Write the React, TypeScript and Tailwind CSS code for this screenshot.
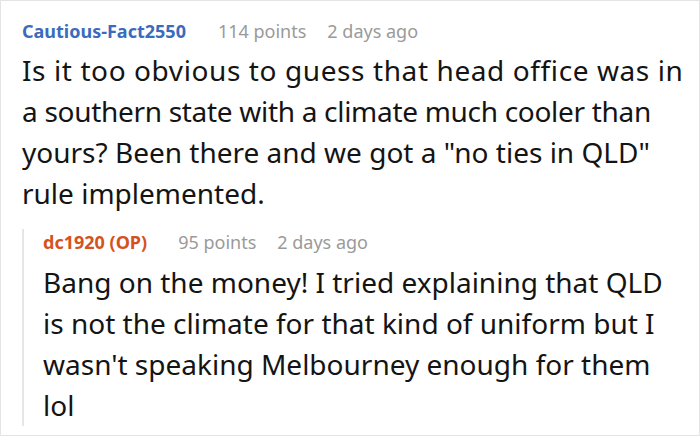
import React from "react";

const bodyLines: { t: string; c: string }[] = [
  { t: "Is it too obvious to guess that head office was in", c: "tracking-[0.6px]" },
  { t: "a southern state with a climate much cooler than", c: "tracking-[-0.3px]" },
  { t: 'yours? Been there and we got a "no ties in QLD"', c: "" },
  { t: "rule implemented.", c: "" },
];

const replyLines = [
  "Bang on the money! I tried explaining that QLD",
  "is not the climate for that kind of uniform but I",
  "wasn't speaking Melbourney enough for them",
  "lol",
];

export default function App() {
  return (
    <div className="w-[700px] h-[436px] bg-white border border-[#e4e4e4] overflow-hidden font-['Noto_Sans',sans-serif] pl-[21px] pr-[20px] pt-[17px]">
      <div className="flex items-baseline text-[18px] leading-[26px] whitespace-nowrap">
        <span className="font-bold text-[#3a6bbd]">Cautious-Fact2550</span>
        <span className="ml-[32px] text-[#9a9a9a]">114 points</span>
        <span className="ml-[21px] text-[#9a9a9a]">2 days ago</span>
      </div>
      <p className="mt-[6px] text-[28px] leading-[41px] text-[#141414] whitespace-nowrap">
        {bodyLines.map((l, i) => (
          <span key={i} className={"block " + l.c}>{l.t}</span>
        ))}
      </p>
      <div className="mt-[27px] border-l-2 border-[#e6e6e6] pl-[19px]">
        <div className="-mt-[12px] flex items-baseline text-[18px] leading-[26px] whitespace-nowrap">
          <span className="font-bold text-[#d4531d]">dc1920 (OP)</span>
          <span className="ml-[31px] text-[#9a9a9a]">95 points</span>
          <span className="ml-[21px] text-[#9a9a9a]">2 days ago</span>
        </div>
        <p className="mt-[7px] -mb-[10px] text-[28px] leading-[41px] text-[#141414] whitespace-nowrap">
          {replyLines.map((l, i) => (
            <span key={i} className="block">{l}</span>
          ))}
        </p>
      </div>
    </div>
  );
}
